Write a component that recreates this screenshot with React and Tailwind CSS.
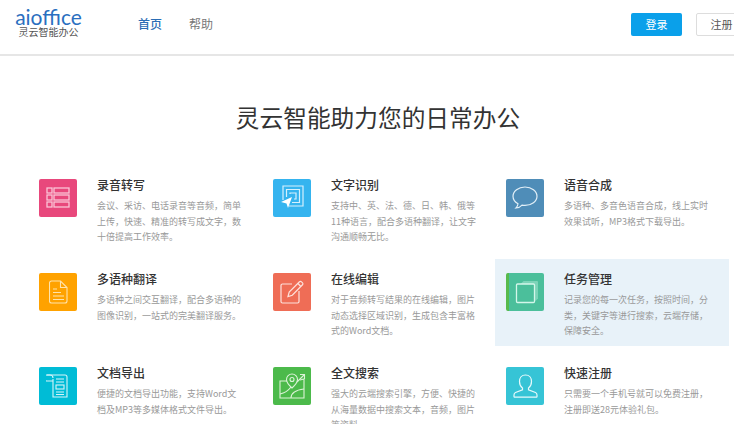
import React from 'react';

const cjk = "font-['Noto_Sans_CJK_SC','Noto_Sans',sans-serif]";

function SheetIcon() {
  return (
    <svg width="24" height="22" viewBox="0 0 24 22" fill="none" stroke="#fbc4d6" strokeWidth="1.3">
      <rect x="1" y="1" width="5" height="5" />
      <rect x="8" y="1" width="15" height="5" />
      <rect x="1" y="8" width="5" height="5" />
      <rect x="8" y="8" width="15" height="5" />
      <rect x="1" y="15" width="5" height="5" />
      <rect x="8" y="15" width="15" height="5" />
    </svg>
  );
}

function ScanIcon() {
  return (
    <svg width="24" height="26" viewBox="0 0 24 26" fill="none" stroke="#d5f0fd" strokeWidth="1.2">
      <path d="M3 15V1h20v20H9" />
      <path d="M6.500 12V4.500h13v13H12" />
      <path d="M10 9V8h6v6h-2" />
      <path d="M1 17l11-5-4 11-1.500-4.500z" fill="#fff" stroke="none" />
    </svg>
  );
}

function BubbleIcon() {
  return (
    <svg width="26" height="24" viewBox="0 0 26 24" fill="none" stroke="#e3f0f8" strokeWidth="1.2">
      <path d="M13 1C6.400 1 1 5.200 1 10.300c0 3.100 2 5.800 5 7.500-.2 1.700-1 3.200-2 4.200 2.400-.2 4.500-1.200 6-2.900 1 .2 2 .3 3 .3 6.600 0 12-4 12-9.100S19.600 1 13 1z" />
    </svg>
  );
}

function DocIcon() {
  return (
    <svg width="19" height="24" viewBox="0 0 19 24" fill="none" stroke="#ffe3ac" strokeWidth="1.100">
      <path d="M2.500 1h9L18 7.500V21a2 2 0 0 1-2 2H2.500a2 2 0 0 1-2-2V3a2 2 0 0 1 2-2z" />
      <path d="M11.500 1v6.500H18" />
      <path d="M4 9h4M4 12.500h8M4 16h11M4 19.500h11" />
    </svg>
  );
}

function EditIcon() {
  return (
    <svg width="24" height="24" viewBox="0 0 24 24" fill="none" stroke="#fde2dc" strokeWidth="1.200">
      <path d="M12 4H2.500A1.500 1.500 0 0 0 1 5.500v16A1.500 1.500 0 0 0 2.500 23h15a1.500 1.500 0 0 0 1.500-1.500V11" />
      <path d="M8 16.500l1.200-4.500L19.500 1.800a1.400 1.400 0 0 1 2 0l1 1a1.400 1.400 0 0 1 0 2L12.300 15.200z" />
      <path d="M18 3.500l2.800 3" />
    </svg>
  );
}

function BoxIcon() {
  return (
    <svg width="24" height="24" viewBox="0 0 24 24" fill="none">
      <path d="M6 3.500L8.500 1H22a1 1 0 0 1 1 1v16.500L20.500 21z" fill="#a5e6d0" fillOpacity="0.55" />
      <rect x="1.500" y="4" width="18" height="18.500" rx="1" fill="#4bbf9b" stroke="#d4f6ea" strokeWidth="1.300" />
    </svg>
  );
}

function ExportIcon() {
  return (
    <svg width="24" height="24" viewBox="0 0 24 24" fill="none" stroke="#d5f4f9" strokeWidth="1.100">
      <path d="M1 1h18a2 2 0 0 1 2 2v20H7V5" />
      <path d="M1 1a2.500 2.500 0 0 0 0 6h6M1 1h3a3 3 0 0 1 3 3" />
      <path d="M10 5h8M10 8h8" />
      <rect x="10" y="11" width="8" height="4" />
      <path d="M10 18h8M10 20.500h8" />
    </svg>
  );
}

function MapIcon() {
  return (
    <svg width="27" height="26" viewBox="0 0 27 26" fill="none" stroke="#dcf3d8" strokeWidth="1.100">
      <path d="M8 8H1v17h24V6l-4 1" />
      <path d="M1 21c5-1 8-3 11-7M12 25c0-5 5-8 13-9" />
      <path d="M18 9l7-7M21 1.500h4.500V6" />
      <path d="M13 1a5.500 5.500 0 0 0-5.500 5.500C7.500 10 13 15 13 15s5.500-5 5.500-8.500A5.500 5.500 0 0 0 13 1z" />
      <circle cx="13" cy="6.500" r="2" />
    </svg>
  );
}

function UserIcon() {
  return (
    <svg width="25" height="24" viewBox="0 0 25 24" fill="none" stroke="#e6f9fb" strokeWidth="1.200">
      <path d="M12.500 1C8.700 1 6.500 3.800 6.500 7.500c0 3 1.400 5.300 3 6.500v1.800L2.500 18.500C1.300 19 1 20 1 21v1.500a.7.7 0 0 0 .7.700h21.600a.7.7 0 0 0 .7-.7V21c0-1-.3-2-1.500-2.500l-7-2.700V14c1.600-1.200 3-3.500 3-6.500C18.500 3.800 16.300 1 12.500 1z" />
    </svg>
  );
}

const features = [
  { title: '录音转写', color: 'bg-[#e8487c]', icon: <SheetIcon />, lines: ['会议、采访、电话录音等音频，简单', '上传，快速、精准的转写成文字，数', '十倍提高工作效率。'] },
  { title: '文字识别', color: 'bg-[#35b4ef]', icon: <ScanIcon />, lines: ['支持中、英、法、德、日、韩、俄等', '11种语言，配合多语种翻译，让文字', '沟通顺畅无比。'] },
  { title: '语音合成', color: 'bg-[#4f8db8]', icon: <BubbleIcon />, lines: ['多语种、多音色语音合成，线上实时', '效果试听，MP3格式下载导出。'] },
  { title: '多语种翻译', color: 'bg-[#ffa200]', icon: <DocIcon />, lines: ['多语种之间交互翻译，配合多语种的', '图像识别，一站式的完美翻译服务。'] },
  { title: '在线编辑', color: 'bg-[#ef6d56]', icon: <EditIcon />, lines: ['对于音频转写结果的在线编辑，图片', '动态选择区域识别，生成包含丰富格', '式的Word文档。'] },
  { title: '任务管理', color: 'bg-[#4bbf9b] border-l-[3px] border-[#58ba4c]', icon: <BoxIcon />, active: true, lines: ['记录您的每一次任务，按照时间，分', '类，关键字等进行搜索，云端存储，', '保障安全。'] },
  { title: '文档导出', color: 'bg-[#00bcd6]', icon: <ExportIcon />, lines: ['便捷的文档导出功能，支持Word文', '档及MP3等多媒体格式文件导出。'] },
  { title: '全文搜索', color: 'bg-[#4cba4b]', icon: <MapIcon />, lines: ['强大的云端搜索引擎，方便、快捷的', '从海量数据中搜索文本，音频，图片', '等资料。'] },
  { title: '快速注册', color: 'bg-[#36c4d6]', icon: <UserIcon />, lines: ['只需要一个手机号就可以免费注册，', '注册即送28元体验礼包。'] },
];

function Feature({ title, color, icon, lines, active }) {
  return (
    <div className={`flex h-[87px] gap-5 pl-[11px] pt-[14px] ${active ? 'bg-[#e8f2f9]' : ''}`}>
      <div className={`flex h-[38px] w-[38px] shrink-0 items-center justify-center rounded-[2px] ${color}`}>
        {icon}
      </div>
      <div className="-mt-[1px] min-w-0">
        <h3 className="text-[12px] leading-[14px] font-medium text-[#333]">{title}</h3>
        <p className="mt-[6px] text-[9px] leading-[15.5px] whitespace-nowrap text-[#999]">
          {lines.map((line) => (
            <span key={line} className="block">{line}</span>
          ))}
        </p>
      </div>
    </div>
  );
}

export default function App() {
  return (
    <div className={`h-[424px] w-[734px] overflow-hidden bg-white ${cjk}`}>
      <header className="flex h-[56px] items-center border-b-2 border-[#e6e6e6] pb-[6px] pl-[15px]">
        <div className="mb-[3px] flex w-[67px] shrink-0 flex-col items-center">
          <span className="font-['Lato',sans-serif] text-[21px] leading-[18px] font-normal text-[#2a6fc0]">aioffice</span>
          <span className="text-[10px] leading-[11px] text-[#555]">灵云智能办公</span>
        </div>
        <nav className="ml-[56px] flex gap-[27px] text-[12px]">
          <a className="font-medium text-[#2a6db5]">首页</a>
          <a className="text-[#777]">帮助</a>
        </nav>
        <div className="ml-auto flex shrink-0 gap-[14px] text-[11px]">
          <button className="h-[23px] w-[51px] rounded-[2px] bg-[#0aa0ea] text-white">登录</button>
          <button className="mr-[-13px] h-[23px] w-[51px] rounded-[2px] border border-[#ddd] text-[#555]">注册</button>
        </div>
      </header>
      <h1 className="mt-[45px] pl-[22px] text-center text-[23.7px] leading-[32px] font-normal text-[#333]">灵云智能助力您的日常办公</h1>
      <div className="mt-[32px] ml-[28px] grid grid-cols-[234px_233px_234px] gap-y-[7px]">
        {features.map((f) => (
          <Feature key={f.title} {...f} />
        ))}
      </div>
    </div>
  );
}
